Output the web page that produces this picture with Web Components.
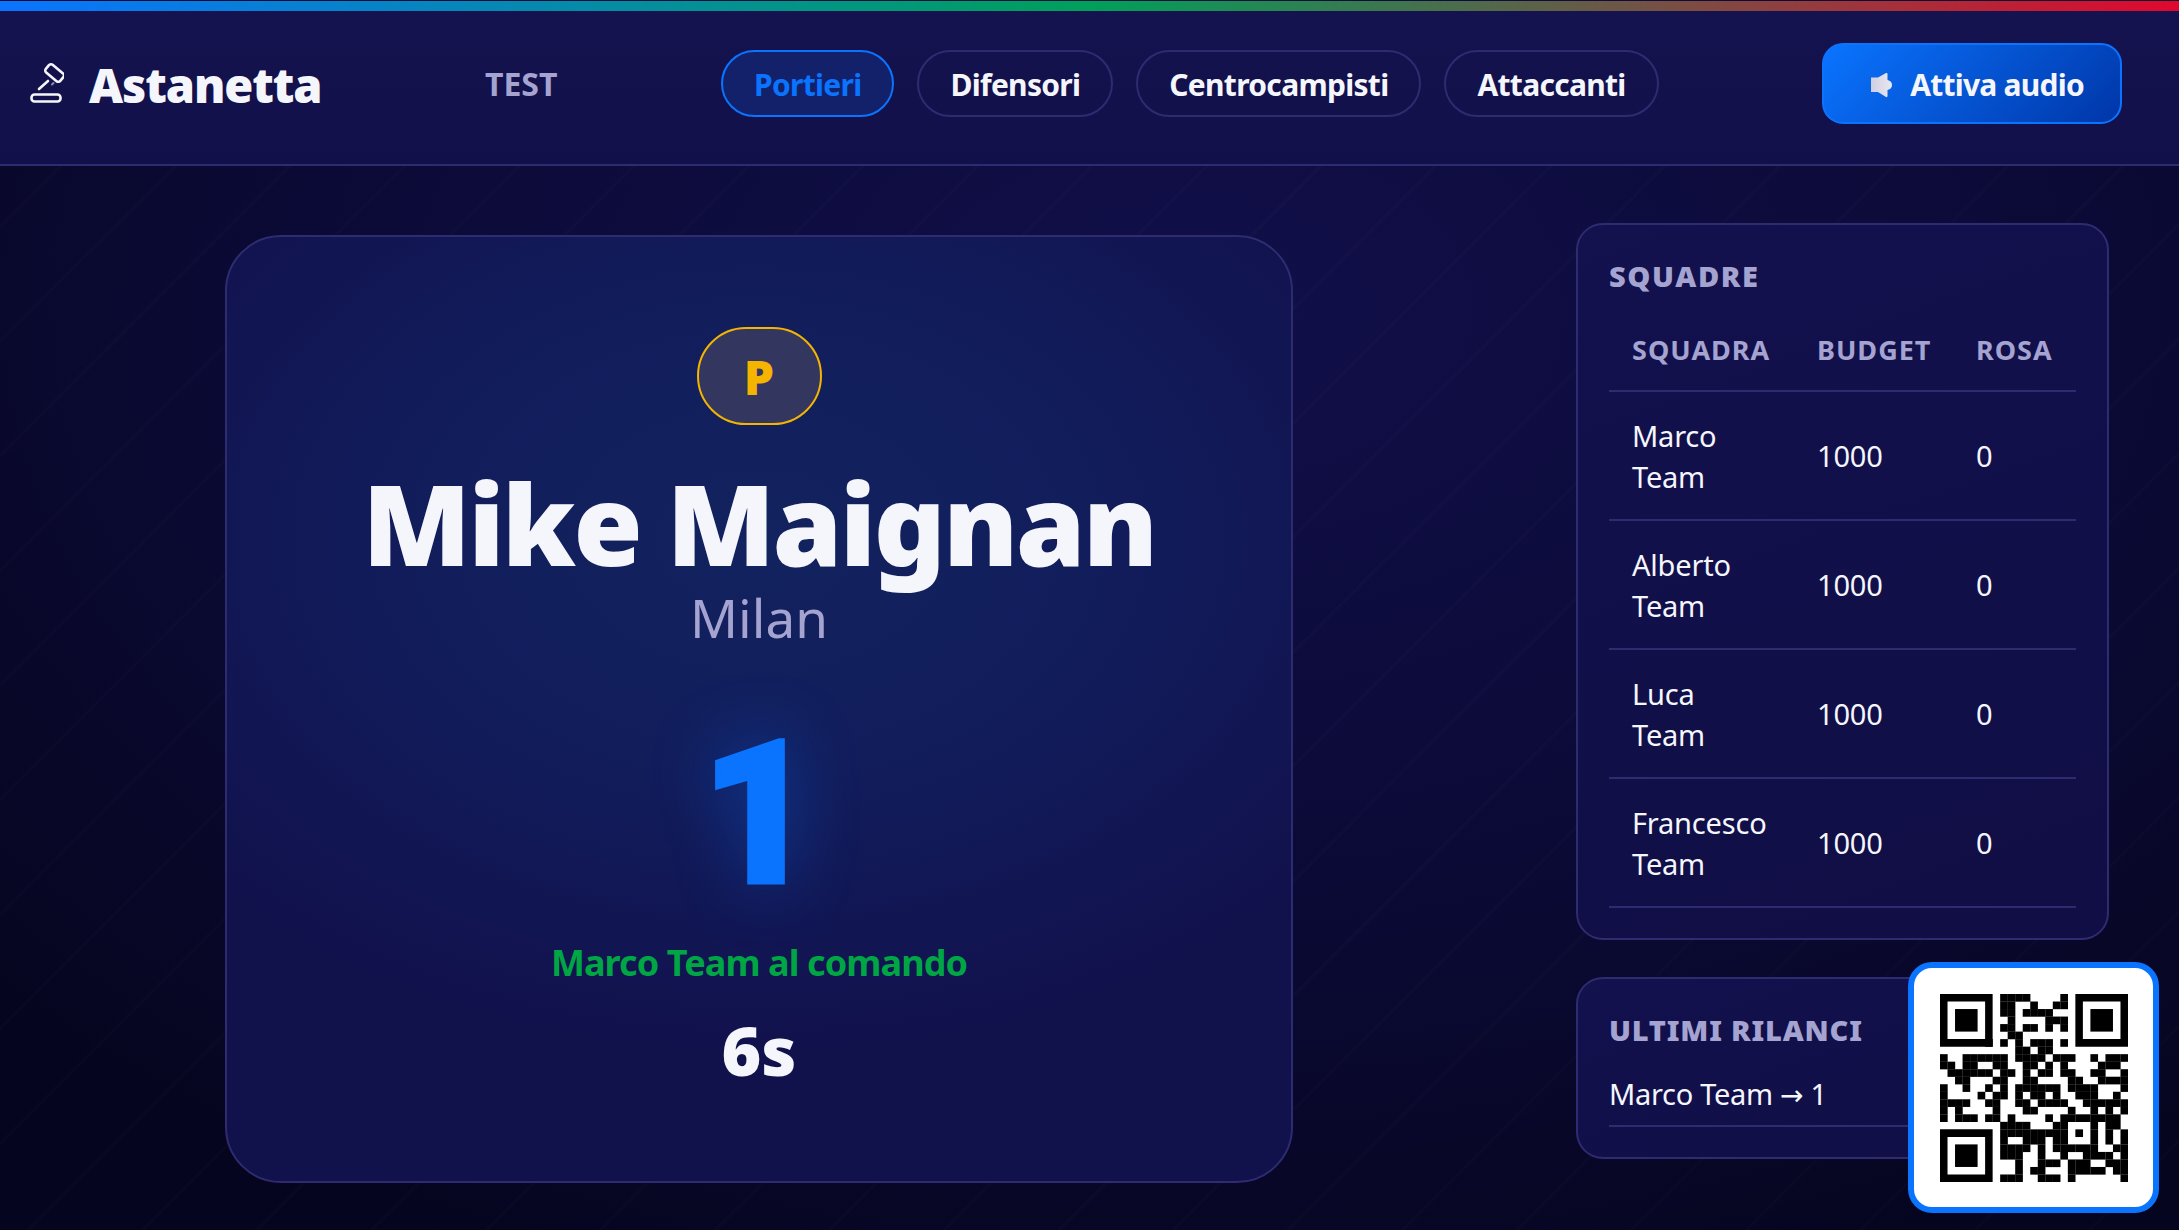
<!DOCTYPE html>
<html lang="it">
<head>
<meta charset="utf-8">
<title>Astanetta</title>
<style>
  html, body { margin: 0; height: 100%; }
  body {
    width: 2179px;
    height: 1230px;
    overflow: hidden;
    position: relative;
    color: #f5f6fc;
    font-family: "Noto Sans", "Open Sans", sans-serif;
    background:
      repeating-linear-gradient(135deg, transparent 0 78px, rgba(255,255,255,.012) 78px 81px),
      radial-gradient(ellipse 75% 85% at 55% 25%, #110f49 0%, #0b0a36 55%, #06051f 100%);
  }
</style>
</head>
<body>
<auction-header>
  <filter-pill active>Portieri</filter-pill>
  <filter-pill>Difensori</filter-pill>
  <filter-pill>Centrocampisti</filter-pill>
  <filter-pill>Attaccanti</filter-pill>
</auction-header>

<auction-main>
  <lot-card role-code="P" name="Mike Maignan" club="Milan" bid="1" leader="Marco Team al comando" timer="6s"></lot-card>
  <side-panel title="SQUADRE">
    <team-table></team-table>
  </side-panel>
  <side-panel title="ULTIMI RILANCI" wide-title>
    <bid-row>Marco Team <span style="font-family:'DejaVu Sans',sans-serif;font-size:28px">→</span> 1</bid-row>
  </side-panel>
</auction-main>

<qr-badge></qr-badge>

<script>
// Header with brand, event label, role filters and the audio button
class AuctionHeader extends HTMLElement {
  constructor() {
    super();
    this.attachShadow({ mode: "open" });
    this.shadowRoot.innerHTML = `
      <style>
        :host { display: block; }
        .rainbow {
          height: 10px;
          margin-top: 1px;
          background: linear-gradient(90deg, #0a74ff 0%, #00a05a 50%, #e0082f 100%);
        }
        header {
          height: 155px;
          box-sizing: border-box;
          display: flex;
          align-items: center;
          justify-content: space-between;
          padding: 0 57px 8px 28px;
          border-bottom: 2px solid #2f2b70;
          background: linear-gradient(180deg, #15134f, #12104a);
        }
        .brand { display: flex; align-items: center; gap: 25px; }
        svg { display: block; }
        h1 { margin: 0; padding-top: 2px; font-size: 47px; line-height: 60px; font-weight: 900; letter-spacing: -1.1px; color: #f5f6fc; }
        .label { font-size: 32px; font-weight: 700; color: #a5a3d0; }
        nav { display: flex; gap: 23px; }
        button {
          display: flex;
          align-items: center;
          gap: 16px;
          height: 81px;
          padding: 2px 36px 0 46px;
          border: 2px solid #0a74ff;
          border-radius: 21px;
          background: linear-gradient(135deg, #0a74ff, #0036a8);
          color: #f5f6fc;
          font: 700 30px "Noto Sans", "Open Sans", sans-serif;
          letter-spacing: -.75px;
        }
      </style>
      <div class="rainbow"></div>
      <header>
        <div class="brand">
          <svg width="36" height="44" viewBox="0 0 36 44" fill="none" stroke="#f5f6fc" stroke-width="2.6" stroke-linecap="round">
            <rect x="3.5" y="32.5" width="29" height="7" rx="3"/>
            <rect x="-9.4" y="-5" width="18.8" height="10" rx="2.6" transform="translate(26.6 11) rotate(40)"/>
            <path d="M11 27 L20 19"/>
            <path d="M24 22.5 L25.5 21" stroke="#8d8cae" stroke-width="2"/>
          </svg>
          <h1>Astanetta</h1>
        </div>
        <div class="label">TEST</div>
        <nav><slot></slot></nav>
        <button>
          <svg width="24" height="26" viewBox="0 0 24 26">
            <defs>
              <linearGradient id="spk" x1="0" x2="1">
                <stop offset="0" stop-color="#cfcfe2"/>
                <stop offset="1" stop-color="#e9e9f2"/>
              </linearGradient>
            </defs>
            <path fill="url(#spk)" d="M1 5.5 H8 L16 1 Q17.5 .5 17.5 2 V8 Q22 9 22 13 Q22 17 17.5 18 V24 Q17.5 25.5 16 25 L8 20 H1 Z"/>
          </svg>
          Attiva audio
        </button>
      </header>
    `;
  }
}

class FilterPill extends HTMLElement {
  constructor() {
    super();
    this.attachShadow({ mode: "open" });
    this.shadowRoot.innerHTML = `
      <style>
        :host {
          display: flex;
          align-items: center;
          height: 67px;
          box-sizing: border-box;
          padding: 2px 31px 0;
          border: 2px solid #2f2b70;
          border-radius: 34px;
          font-size: 30px;
          font-weight: 700;
          letter-spacing: -.7px;
          color: #f5f6fc;
        }
        :host([active]) {
          border-color: #0a74ff;
          background: #13216a;
          color: #0a74ff;
        }
      </style>
      <slot></slot>
    `;
  }
}

// Two column page body, the card on the left and the panels on the right
class AuctionMain extends HTMLElement {
  constructor() {
    super();
    this.attachShadow({ mode: "open" });
    this.shadowRoot.innerHTML = `
      <style>
        :host {
          display: grid;
          grid-template-columns: 1518px 533px;
          grid-template-rows: auto 1fr;
          column-gap: 58px;
          row-gap: 37px;
          padding-top: 57px;
          align-items: start;
        }
        ::slotted(lot-card) { grid-row: 1 / span 2; justify-self: center; margin-top: 12px; }
      </style>
      <slot></slot>
    `;
  }
}

class LotCard extends HTMLElement {
  constructor() {
    super();
    this.attachShadow({ mode: "open" });
  }

  connectedCallback() {
    const get = (name) => this.getAttribute(name) || "";
    this.shadowRoot.innerHTML = `
      <style>
        :host {
          display: flex;
          flex-direction: column;
          align-items: center;
          width: 1068px;
          height: 948px;
          box-sizing: border-box;
          padding-top: 90px;
          border: 2px solid #2f2b70;
          border-radius: 56px;
          background: radial-gradient(ellipse 70% 55% at 50% 32%, #12235f 0%, #121d5c 45%, #11114c 100%);
        }
        .badge {
          width: 125px;
          height: 98px;
          box-sizing: border-box;
          display: flex;
          align-items: center;
          justify-content: center;
          border: 2px solid #f5b400;
          border-radius: 49px;
          background: #33365e;
          color: #f5b400;
          font-size: 48px;
          font-weight: 900;
        }
        .name { margin-top: 39px; font-size: 112px; line-height: 118px; font-weight: 900; letter-spacing: -2.5px; color: #f5f6fc; }
        .club { margin-top: 0; font-size: 53px; line-height: 72px; color: #a5a3d0; }
        .bid {
          margin-top: 45px;
          font-family: Roboto, "Noto Sans", sans-serif;
          font-size: 198px;
          line-height: 230px;
          font-weight: 900;
          color: #0a74ff;
          -webkit-text-stroke: 5px #0a74ff;
          text-shadow: 0 0 70px rgba(10,116,255,.45);
        }
        .leader { margin-top: 9px; font-size: 36px; line-height: 50px; font-weight: 700; letter-spacing: -.9px; color: #00a544; }
        .timer { margin-top: 17px; font-size: 68px; line-height: 90px; font-weight: 900; color: #f5f6fc; }
      </style>
      <div class="badge">${get("role-code")}</div>
      <div class="name">${get("name")}</div>
      <div class="club">${get("club")}</div>
      <div class="bid">${get("bid")}</div>
      <div class="leader">${get("leader")}</div>
      <div class="timer">${get("timer")}</div>
    `;
  }
}

class SidePanel extends HTMLElement {
  constructor() {
    super();
    this.attachShadow({ mode: "open" });
  }

  connectedCallback() {
    this.shadowRoot.innerHTML = `
      <style>
        :host {
          display: block;
          box-sizing: border-box;
          padding: 31px 31px 30px 31px;
          border: 2px solid #2f2b70;
          border-radius: 27px;
          background: linear-gradient(160deg, #13114e, #100e44);
        }
        h2 {
          margin: 0;
          font-size: 29px;
          line-height: 40px;
          font-weight: 900;
          letter-spacing: 1.6px;
          color: #a5a3d0;
        }
        :host([wide-title]) h2 { letter-spacing: .8px; }
      </style>
      <h2>${this.getAttribute("title") || ""}</h2>
      <slot></slot>
    `;
  }
}

// Team standings, each name wraps on two lines like in the narrow column
class TeamTable extends HTMLElement {
  constructor() {
    super();
    this.attachShadow({ mode: "open" });
    const teams = ["Marco Team", "Alberto Team", "Luca Team", "Francesco Team"];
    this.shadowRoot.innerHTML = `
      <style>
        :host { display: block; margin-top: 13px; }
        table { width: 467px; table-layout: fixed; border-collapse: collapse; }
        th, td { padding: 0 23px; text-align: left; border-bottom: 2px solid #2f2b70; }
        th {
          height: 81px;
          font-size: 27px;
          font-weight: 700;
          letter-spacing: 1px;
          color: #a5a3d0;
          white-space: nowrap;
        }
        td { height: 127px; font-size: 29px; line-height: 41px; letter-spacing: -.2px; color: #f5f6fc; }
      </style>
      <table>
        <colgroup><col style="width:185px"><col style="width:159px"><col style="width:123px"></colgroup>
        <tr><th>SQUADRA</th><th>BUDGET</th><th>ROSA</th></tr>
        ${teams.map((team) => `<tr><td>${team}</td><td>1000</td><td>0</td></tr>`).join("")}
      </table>
    `;
  }
}

class BidRow extends HTMLElement {
  constructor() {
    super();
    this.attachShadow({ mode: "open" });
    this.shadowRoot.innerHTML = `
      <style>
        :host {
          display: block;
          width: 467px;
          margin-top: 16px;
          padding: 8px 0 9px;
          border-bottom: 2px solid #2f2b70;
          font-size: 29px;
          line-height: 40px;
          letter-spacing: -.3px;
          color: #f5f6fc;
        }
      </style>
      <slot></slot>
    `;
  }
}

// QR code overlay, fixed in the bottom right corner
class QrBadge extends HTMLElement {
  constructor() {
    super();
    this.attachShadow({ mode: "open" });
    // Dark modules outside the finder patterns, row -> columns
    const rows = {
      0: [8, 9, 10, 11, 16],
      1: [8, 9, 12, 15, 16],
      2: [8, 9, 11, 12, 13, 14],
      3: [9, 14, 15, 16],
      4: [8, 9, 11, 12, 14, 16],
      5: [9, 10],
      6: [6, 8, 10, 12, 13, 14, 16],
      7: [10, 11, 13, 14],
      8: [0, 3, 4, 5, 6, 7, 8, 10, 11, 12, 13, 15, 16, 17, 20, 22, 23, 24],
      9: [0, 1, 3, 4, 7, 8, 11, 12, 14, 16, 21, 22, 23],
      10: [1, 2, 3, 4, 5, 6, 8, 9, 11, 13, 14, 16, 17, 20, 21, 24],
      11: [2, 3, 7, 8, 11, 12, 17, 18, 21, 22, 23, 24],
      12: [0, 3, 6, 8, 10, 11, 12, 13, 14, 15, 17, 18, 19, 20, 24],
      13: [0, 5, 7, 8, 10, 12, 13, 15, 18, 19, 20, 23],
      14: [0, 1, 2, 3, 6, 7, 10, 11, 13, 14, 15, 16, 19, 20, 21, 22, 23, 24],
      15: [0, 2, 7, 11, 12, 17, 20, 22, 24],
      16: [0, 2, 3, 4, 6, 7, 9, 14, 16, 17, 18, 19, 20, 21, 22, 23],
      17: [8, 9, 10, 11, 15, 16, 20, 22, 23],
      18: [8, 9, 10, 11, 12, 13, 14, 15, 16, 18, 20, 22, 24],
      19: [8, 11, 12, 13, 15, 16, 20, 22, 24],
      20: [8, 9, 10, 11, 13, 15, 16, 17, 18, 19, 20, 23, 24],
      21: [8, 9, 10, 13, 16, 19, 20, 21, 22, 24],
      22: [10, 13, 14, 15, 17, 18, 19, 22, 23, 24],
      23: [10, 12, 13, 17, 18, 19, 20, 21, 23, 24],
      24: [8, 9, 10, 13, 14, 15, 17, 24],
    };
    let modules = "";
    for (const [row, cols] of Object.entries(rows)) {
      for (const col of cols) modules += `<rect x="${col}" y="${row}" width="1.02" height="1.02"/>`;
    }
    const finder = (x, y) => `
      <path d="M${x} ${y}h7v7h-7z M${x + 1} ${y + 1}v5h5v-5z" fill-rule="evenodd"/>
      <rect x="${x + 2}" y="${y + 2}" width="3" height="3"/>`;
    this.shadowRoot.innerHTML = `
      <style>
        :host {
          position: absolute;
          left: 1908px;
          top: 962px;
          width: 251px;
          height: 251px;
          box-sizing: border-box;
          display: flex;
          align-items: center;
          justify-content: center;
          background: #fff;
          border: 6px solid #0a74ff;
          border-radius: 24px;
        }
        svg { display: block; }
      </style>
      <svg width="188" height="188" viewBox="0 0 25 25" fill="#000">
        ${finder(0, 0)}${finder(18, 0)}${finder(0, 18)}
        ${modules}
      </svg>
    `;
  }
}

customElements.define("auction-header", AuctionHeader);
customElements.define("filter-pill", FilterPill);
customElements.define("auction-main", AuctionMain);
customElements.define("lot-card", LotCard);
customElements.define("side-panel", SidePanel);
customElements.define("team-table", TeamTable);
customElements.define("bid-row", BidRow);
customElements.define("qr-badge", QrBadge);
</script>
</body>
</html>
